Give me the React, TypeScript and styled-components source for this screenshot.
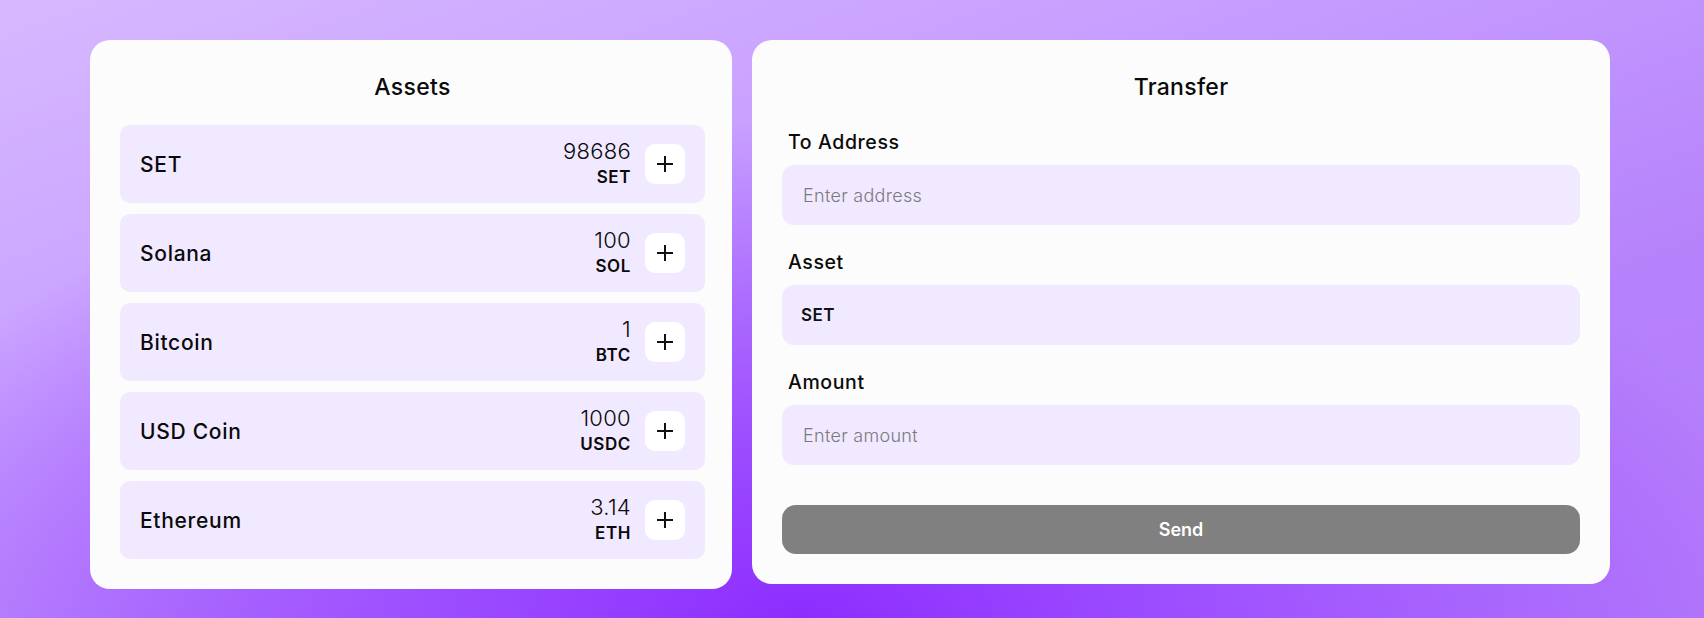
import * as React from "react"
import styled, { createGlobalStyle } from "styled-components"

const GlobalStyle = createGlobalStyle`
  * {
    box-sizing: border-box;
  }
  html, body {
    margin: 0;
    padding: 0;
  }
  body {
    font-family: Inter, "Noto Sans", sans-serif;
    color: #0a0a0a;
    background: #c49bff;
  }
`

const Page = styled.main`
  min-height: 100vh;
  padding: 40px 0 0 90px;
  display: grid;
  grid-template-columns: 642px 858px;
  justify-content: start;
  align-items: start;
  gap: 20px;
  background:
    radial-gradient(ellipse 70% 95% at 47% 100%, #8d2dff 0%, #9f52ff 35%, rgba(190, 145, 255, 0) 85%),
    linear-gradient(160deg, #d7b8ff 0%, #c79fff 35%, #b682fb 70%, #b47cfa 100%);
`

const Card = styled.section<{ $padRight?: number }>`
  background: #fcfcfc;
  border-radius: 20px;
  padding: 30px ${(p) => p.$padRight ?? 30}px 30px 30px;
`

const CardTitle = styled.h2`
  margin: 0;
  font-size: 23px;
  font-weight: 500;
  line-height: 34px;
  letter-spacing: 0.3px;
  text-align: center;
`

const AssetList = styled.ul`
  list-style: none;
  margin: 21px 0 0;
  padding: 0;
  display: flex;
  flex-direction: column;
  gap: 11px;
`

const AssetRow = styled.li`
  height: 78px;
  padding: 0 20px;
  display: flex;
  align-items: center;
  justify-content: space-between;
  background: #f1e9ff;
  border-radius: 10px;
`

const AssetName = styled.span`
  font-size: 21px;
  font-weight: 500;
  letter-spacing: 0.7px;
`

const AssetRight = styled.div`
  display: flex;
  align-items: center;
  gap: 14px;
`

const Amount = styled.div`
  display: flex;
  flex-direction: column;
  align-items: flex-end;
`

const Value = styled.span`
  font-size: 22px;
  font-weight: 300;
  line-height: 26px;
  letter-spacing: 0.3px;
`

const Symbol = styled.span`
  font-size: 17px;
  font-weight: 600;
  line-height: 26px;
  letter-spacing: 0.6px;
`

const AddButton = styled.button`
  width: 40px;
  height: 40px;
  border: none;
  border-radius: 10px;
  background: #ffffff;
  color: #111;
  display: flex;
  align-items: center;
  justify-content: center;
  padding: 0;
  cursor: pointer;
`

const Form = styled.form`
  margin-top: 24px;
  display: flex;
  flex-direction: column;
`

const Field = styled.div`
  display: flex;
  flex-direction: column;
  gap: 9px;
  margin-bottom: 23px;
`

const Label = styled.label`
  padding-left: 6px;
  font-size: 19.5px;
  font-weight: 500;
  line-height: 28px;
  letter-spacing: 0.6px;
`

const Input = styled.input`
  height: 60px;
  border: none;
  border-radius: 12px;
  background: #f1e9ff;
  padding: 0 21px;
  font-family: inherit;
  font-size: 18px;
  font-weight: 300;
  letter-spacing: 0.3px;
  color: #111;
  outline: none;

  &::placeholder {
    color: #7c7a80;
  }
`

const Select = styled.select`
  height: 60px;
  border: none;
  border-radius: 12px;
  background: #f1e9ff;
  padding: 0 19px;
  font-family: inherit;
  font-size: 17px;
  font-weight: 600;
  letter-spacing: 0.5px;
  color: #111;
  appearance: none;
  outline: none;
`

const SendButton = styled.button`
  margin-top: 17px;
  height: 49px;
  border: none;
  border-radius: 14px;
  background: #808080;
  color: #ffffff;
  font-family: inherit;
  font-size: 18px;
  font-weight: 600;
  cursor: pointer;
`

const PlusIcon = () => (
  <svg width="18" height="18" viewBox="0 0 18 18" fill="none" stroke="currentColor" strokeWidth="2" strokeLinecap="butt">
    <line x1="9" y1="1" x2="9" y2="17" />
    <line x1="1" y1="9" x2="17" y2="9" />
  </svg>
)

const assets = [
  { name: "SET", amount: "98686", symbol: "SET" },
  { name: "Solana", amount: "100", symbol: "SOL" },
  { name: "Bitcoin", amount: "1", symbol: "BTC" },
  { name: "USD Coin", amount: "1000", symbol: "USDC" },
  { name: "Ethereum", amount: "3.14", symbol: "ETH" }
]

export default function App() {
  const [asset, setAsset] = React.useState("SET")

  return (
    <>
      <GlobalStyle />
      <Page>
        <Card $padRight={27}>
          <CardTitle>Assets</CardTitle>
          <AssetList>
            {assets.map((a) => (
              <AssetRow key={a.symbol}>
                <AssetName>{a.name}</AssetName>
                <AssetRight>
                  <Amount>
                    <Value>{a.amount}</Value>
                    <Symbol>{a.symbol}</Symbol>
                  </Amount>
                  <AddButton type="button" aria-label={`Add ${a.name}`}>
                    <PlusIcon />
                  </AddButton>
                </AssetRight>
              </AssetRow>
            ))}
          </AssetList>
        </Card>

        <Card>
          <CardTitle>Transfer</CardTitle>
          <Form onSubmit={(e) => e.preventDefault()}>
            <Field>
              <Label htmlFor="to">To Address</Label>
              <Input id="to" placeholder="Enter address" />
            </Field>
            <Field>
              <Label htmlFor="asset">Asset</Label>
              <Select id="asset" value={asset} onChange={(e) => setAsset(e.target.value)}>
                {assets.map((a) => (
                  <option key={a.symbol} value={a.symbol}>
                    {a.symbol}
                  </option>
                ))}
              </Select>
            </Field>
            <Field>
              <Label htmlFor="amount">Amount</Label>
              <Input id="amount" placeholder="Enter amount" />
            </Field>
            <SendButton type="submit">Send</SendButton>
          </Form>
        </Card>
      </Page>
    </>
  )
}
